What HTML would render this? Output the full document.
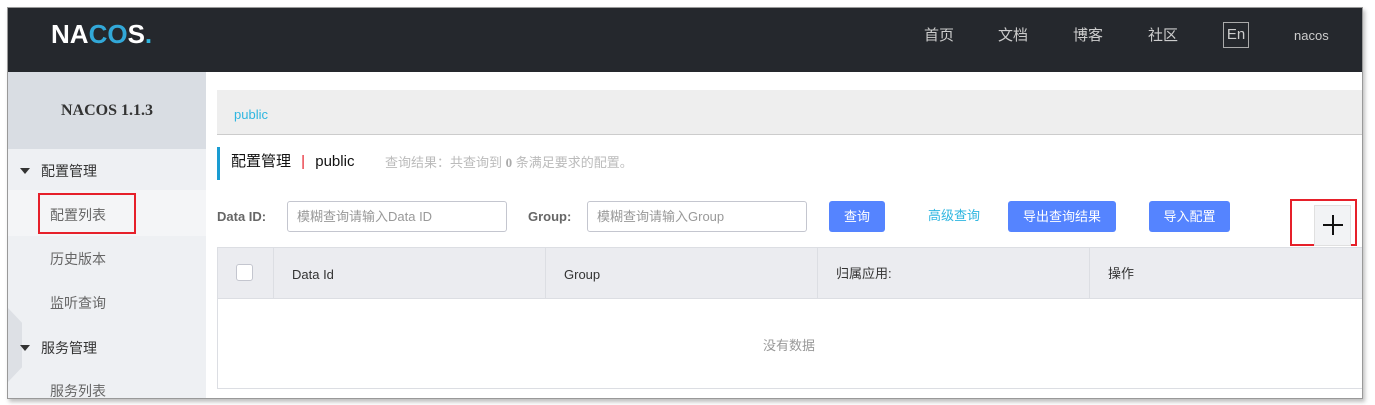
<!DOCTYPE html><html><head><meta charset="utf-8"><style>
*{margin:0;padding:0;box-sizing:border-box}
body{width:1375px;height:405px;background:#fff;position:relative;overflow:hidden;font-family:"Liberation Sans","Noto Sans CJK SC",sans-serif;font-size:13px;color:#333;line-height:18px}
.a{position:absolute}
.frame{left:7px;top:7px;width:1356px;height:392px;border:1px solid #999;box-shadow:2px 3px 4px rgba(0,0,0,.25);overflow:hidden;background:#fff}
.btn{background:#5584ff;color:#fff;border-radius:3px;height:31px;line-height:31px;text-align:center;font-size:13px}
.inp{border:1px solid #c4c6cf;border-radius:3px;height:31px;line-height:29px;padding-left:9px;color:#999;font-size:13px;background:#fff}
.lab{font-weight:bold;color:#666;font-size:13px}
.side{color:#666;font-size:14px}
.tri{width:0;height:0;border-left:5px solid transparent;border-right:5px solid transparent;border-top:6px solid #333}
</style></head><body>
<div class="a frame">
 <div class="a" style="left:0;top:0;width:1356px;height:64px;background:#25282d"></div>
 <div class="a" style="left:43px;top:13px;color:#fff;font-size:26px;line-height:26px;font-weight:bold;letter-spacing:0px">NA<span style="color:#32a8d8">CO</span>S<span style="color:#2fb6e0">.</span></div>
 <div class="a" style="left:916px;top:19px;color:#ccc;font-size:15px">首页</div>
 <div class="a" style="left:990px;top:19px;color:#ccc;font-size:15px">文档</div>
 <div class="a" style="left:1065px;top:19px;color:#ccc;font-size:15px">博客</div>
 <div class="a" style="left:1140px;top:19px;color:#ccc;font-size:15px">社区</div>
 <div class="a" style="left:1215px;top:14px;width:26px;height:26px;border:1px solid #aaa;color:#ccc;font-size:15px;text-align:center;line-height:24px">En</div>
 <div class="a" style="left:1286px;top:19px;color:#ccc;font-size:13px">nacos</div>

 <div class="a" style="left:0;top:64px;width:198px;height:330px;background:#eef0f3"></div>
 <div class="a" style="left:0;top:64px;width:198px;height:77px;background:#d9dde3;text-align:center;line-height:77px;font-family:'Liberation Serif',serif;font-weight:bold;font-size:16px;color:#333">NACOS 1.1.3</div>
 <div class="a" style="left:0;top:182px;width:198px;height:46px;background:#f4f5f7"></div>
 <div class="a" style="left:0;top:300px;width:14px;height:74px;background:#dde0e5;clip-path:polygon(0 0,100% 20%,100% 80%,0 100%)"></div>
 <div class="a tri" style="left:12px;top:160px"></div>
 <div class="a side" style="left:33px;top:154px;color:#333">配置管理</div>
 <div class="a side" style="left:42px;top:198px">配置列表</div>
 <div class="a" style="left:30px;top:185px;width:98px;height:41px;border:2px solid #e6202a"></div>
 <div class="a side" style="left:42px;top:242px">历史版本</div>
 <div class="a side" style="left:42px;top:286px">监听查询</div>
 <div class="a tri" style="left:12px;top:337px"></div>
 <div class="a side" style="left:33px;top:331px;color:#333">服务管理</div>
 <div class="a side" style="left:42px;top:374px">服务列表</div>

 <div class="a" style="left:209px;top:82px;width:1147px;height:45px;background:#eee;border-bottom:1px solid #ccc"></div>
 <div class="a" style="left:226px;top:98px;color:#2fb6e0;font-size:13px">public</div>
 <div class="a" style="left:209px;top:139px;width:3px;height:33px;background:#1a9cd2"></div>
 <div class="a" style="left:223px;top:145px;font-size:15px;color:#111">配置管理 <span style="color:#e6202a;margin:0 6px">|</span> public</div>
 <div class="a" style="left:377px;top:146px;color:#bbb;font-size:13px">查询结果：共查询到 <b style="color:#aaa;font-family:'Liberation Serif',serif">0</b> 条满足要求的配置。</div>

 <div class="a lab" style="left:209px;top:200px">Data ID:</div>
 <div class="a inp" style="left:279px;top:193px;width:220px">模糊查询请输入Data ID</div>
 <div class="a lab" style="left:520px;top:200px">Group:</div>
 <div class="a inp" style="left:579px;top:193px;width:220px">模糊查询请输入Group</div>
 <div class="a btn" style="left:821px;top:193px;width:56px">查询</div>
 <div class="a" style="left:920px;top:199px;color:#2fb6e0">高级查询</div>
 <div class="a btn" style="left:1000px;top:193px;width:108px">导出查询结果</div>
 <div class="a btn" style="left:1141px;top:193px;width:81px">导入配置</div>
 <div class="a" style="left:1282px;top:191px;width:67px;height:47px;border:2px solid #e6202a"></div>
 <div class="a" style="left:1306px;top:197px;width:37px;height:41px;background:#f2f3f5;border:1px solid #e0e0e0"></div>
 <div class="a" style="left:1315px;top:216px;width:20px;height:2px;background:#111"></div>
 <div class="a" style="left:1324px;top:207px;width:2px;height:20px;background:#111"></div>

 <div class="a" style="left:209px;top:239px;width:1147px;height:142px;border:1px solid #dcdee3"></div>
 <div class="a" style="left:210px;top:240px;width:1146px;height:51px;background:#ebecf0;border-bottom:1px solid #dcdee3"></div>
 <div class="a" style="left:265px;top:240px;width:1px;height:51px;background:#dcdee3"></div>
 <div class="a" style="left:537px;top:240px;width:1px;height:51px;background:#dcdee3"></div>
 <div class="a" style="left:809px;top:240px;width:1px;height:51px;background:#dcdee3"></div>
 <div class="a" style="left:1081px;top:240px;width:1px;height:51px;background:#dcdee3"></div>
 <div class="a" style="left:228px;top:256px;width:17px;height:17px;border:1px solid #c4c6cf;border-radius:3px;background:#fff"></div>
 <div class="a" style="left:284px;top:258px">Data Id</div>
 <div class="a" style="left:556px;top:258px">Group</div>
 <div class="a" style="left:828px;top:257px">归属应用:</div>
 <div class="a" style="left:1100px;top:257px">操作</div>
 <div class="a" style="left:755px;top:329px;color:#999">没有数据</div>
</div>
</body></html>
